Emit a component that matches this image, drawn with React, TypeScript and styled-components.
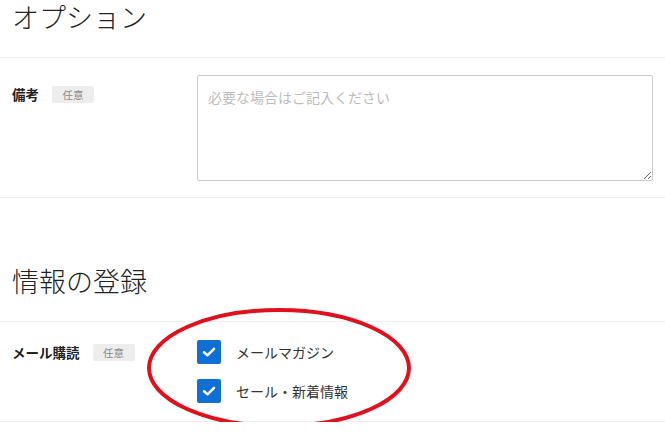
import React from "react"
import styled, { createGlobalStyle } from "styled-components"

const GlobalStyle = createGlobalStyle`
	body {
		margin: 0;
		background: #fff;
		font-family: "Noto Sans CJK JP", "Noto Sans", sans-serif;
		color: #333;
	}
`

const SPage = styled.div`
	width: 665px;
`

const SSection = styled.section<{ $first?: boolean }>`
	margin-top: ${(p) => (p.$first ? 0 : 66)}px;
`

const SHeading = styled.h2`
	margin: 0;
	padding: 0 12px 23px;
	font-size: 27px;
	line-height: 34px;
	font-weight: 300;
	color: #222;
	border-bottom: 1px solid #eee;
`

const SRow = styled.div<{ $top: number; $bottom: number }>`
	position: relative;
	display: flex;
	padding: ${(p) => p.$top}px 12px ${(p) => p.$bottom}px;
	border-bottom: 1px solid #eee;
`

const SLabelCell = styled.div<{ $offset: number }>`
	display: flex;
	align-items: center;
	width: 185px;
	flex-shrink: 0;
	padding-top: ${(p) => p.$offset}px;
	height: 20px;
`

const SLabel = styled.span`
	font-size: 13.5px;
	font-weight: 700;
	color: #222;
`

const SBadge = styled.span`
	display: inline-flex;
	align-items: center;
	justify-content: center;
	width: 42px;
	height: 17px;
	margin-left: 13px;
	border-radius: 2px;
	background: #ededed;
	color: #888;
	font-size: 10.5px;
`

const SField = styled.div`
	flex: 1;
	display: flex;
	flex-direction: column;
	gap: 15px;
`

const STextarea = styled.textarea`
	box-sizing: border-box;
	width: 456px;
	height: 106px;
	padding: 11px 10px;
	border: 1px solid #ccc;
	border-radius: 2px;
	font-family: inherit;
	font-size: 14px;
	line-height: 20px;
	color: #333;
	&::placeholder {
		color: #bbb;
	}
`

const SCheckRow = styled.label`
	display: flex;
	align-items: center;
	gap: 15px;
	height: 24px;
	font-size: 14px;
	color: #333;
`

const SBox = styled.span`
	display: flex;
	align-items: center;
	justify-content: center;
	width: 24px;
	height: 24px;
	border-radius: 2px;
	background: #0f6fd4;
`

const SCircle = styled.svg`
	position: absolute;
	left: 145px;
	top: -16px;
	pointer-events: none;
`

function Check({ text }: { text: string }) {
	return (
		<SCheckRow>
			<SBox>
				<svg width="16" height="16" viewBox="0 0 16 16">
					<path d="M3 8.3 L6.5 11.3 L13 4.8" fill="none" stroke="#fff" strokeWidth="2.5" strokeLinecap="round" strokeLinejoin="round" />
				</svg>
			</SBox>
			{text}
		</SCheckRow>
	)
}

export default function App() {
	return (
		<SPage>
			<GlobalStyle />
			<SSection $first>
				<SHeading>オプション</SHeading>
				<SRow $top={17} $bottom={16}>
					<SLabelCell $offset={9}>
						<SLabel>備考</SLabel>
						<SBadge>任意</SBadge>
					</SLabelCell>
					<SField>
						<STextarea placeholder="必要な場合はご記入ください" />
					</SField>
				</SRow>
			</SSection>
			<SSection>
				<SHeading>情報の登録</SHeading>
				<SRow $top={18} $bottom={18}>
					<SLabelCell $offset={2}>
						<SLabel>メール購読</SLabel>
						<SBadge>任意</SBadge>
					</SLabelCell>
					<SField>
						<Check text="メールマガジン" />
						<Check text="セール・新着情報" />
					</SField>
					<SCircle width="270" height="126" viewBox="0 0 270 126">
						<ellipse cx="134" cy="62" rx="130" ry="58" fill="none" stroke="#e0101c" strokeWidth="4" />
					</SCircle>
				</SRow>
			</SSection>
		</SPage>
	)
}
